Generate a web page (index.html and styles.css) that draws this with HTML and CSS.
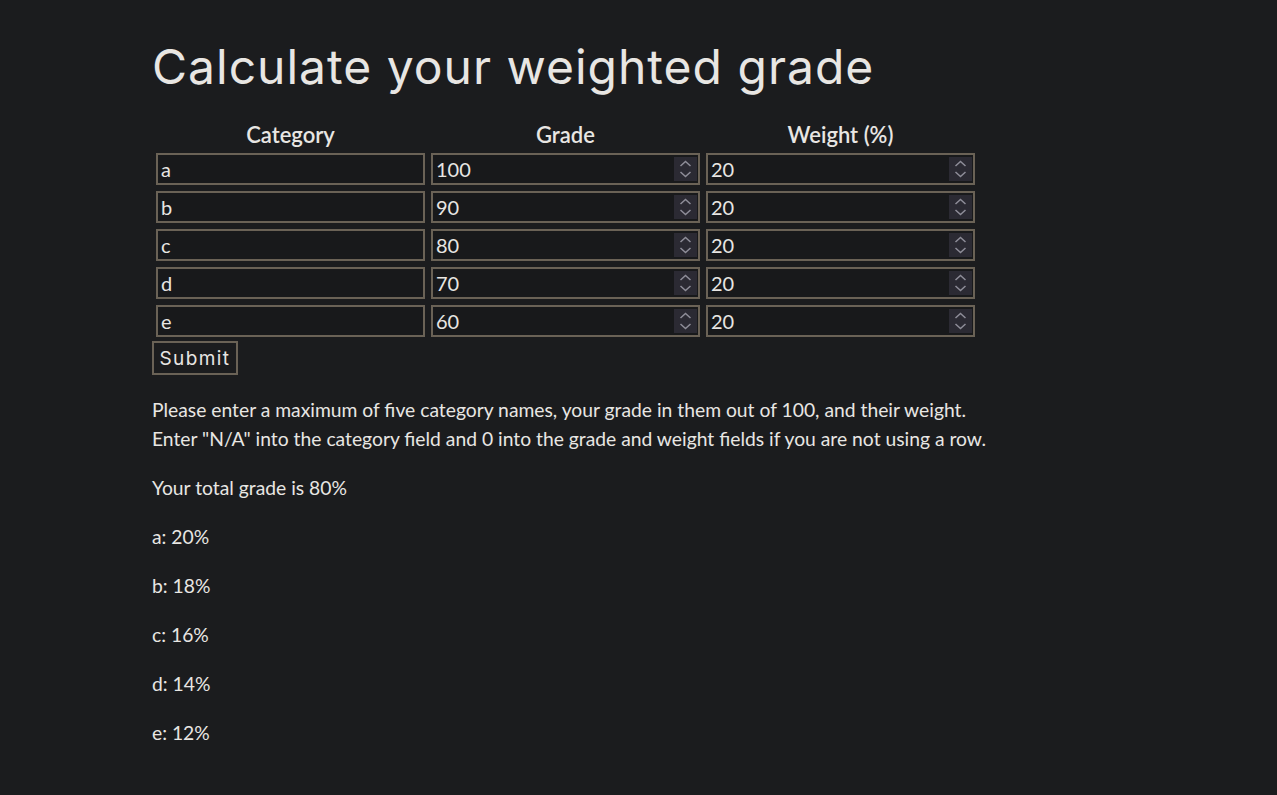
FILE: index.html
```html
<!DOCTYPE html>
<html lang="en">
<head>
<meta charset="utf-8">
<title>Weighted Grade Calculator</title>
<link rel="stylesheet" href="styles.css">
</head>
<body>
<main class="page">
  <h1 class="title">Calculate your weighted grade</h1>
  <form class="calc">
    <table class="grid">
      <thead>
        <tr><th>Category</th><th>Grade</th><th>Weight (%)</th></tr>
      </thead>
      <tbody>
        <tr>
          <td><input class="field" type="text" value="a"></td>
          <td><div class="num"><input type="number" value="100"><span class="spin"><svg viewBox="0 0 23 24" width="23" height="24"><path d="M6.5 9 L11.5 4.5 L16.5 9 M6.5 15 L11.5 19.5 L16.5 15" fill="none" stroke="#8e8d98" stroke-width="1.5"/></svg></span></div></td>
          <td><div class="num"><input type="number" value="20"><span class="spin"><svg viewBox="0 0 23 24" width="23" height="24"><path d="M6.5 9 L11.5 4.5 L16.5 9 M6.5 15 L11.5 19.5 L16.5 15" fill="none" stroke="#8e8d98" stroke-width="1.5"/></svg></span></div></td>
        </tr>
        <tr>
          <td><input class="field" type="text" value="b"></td>
          <td><div class="num"><input type="number" value="90"><span class="spin"><svg viewBox="0 0 23 24" width="23" height="24"><path d="M6.5 9 L11.5 4.5 L16.5 9 M6.5 15 L11.5 19.5 L16.5 15" fill="none" stroke="#8e8d98" stroke-width="1.5"/></svg></span></div></td>
          <td><div class="num"><input type="number" value="20"><span class="spin"><svg viewBox="0 0 23 24" width="23" height="24"><path d="M6.5 9 L11.5 4.5 L16.5 9 M6.5 15 L11.5 19.5 L16.5 15" fill="none" stroke="#8e8d98" stroke-width="1.5"/></svg></span></div></td>
        </tr>
        <tr>
          <td><input class="field" type="text" value="c"></td>
          <td><div class="num"><input type="number" value="80"><span class="spin"><svg viewBox="0 0 23 24" width="23" height="24"><path d="M6.5 9 L11.5 4.5 L16.5 9 M6.5 15 L11.5 19.5 L16.5 15" fill="none" stroke="#8e8d98" stroke-width="1.5"/></svg></span></div></td>
          <td><div class="num"><input type="number" value="20"><span class="spin"><svg viewBox="0 0 23 24" width="23" height="24"><path d="M6.5 9 L11.5 4.5 L16.5 9 M6.5 15 L11.5 19.5 L16.5 15" fill="none" stroke="#8e8d98" stroke-width="1.5"/></svg></span></div></td>
        </tr>
        <tr>
          <td><input class="field" type="text" value="d"></td>
          <td><div class="num"><input type="number" value="70"><span class="spin"><svg viewBox="0 0 23 24" width="23" height="24"><path d="M6.5 9 L11.5 4.5 L16.5 9 M6.5 15 L11.5 19.5 L16.5 15" fill="none" stroke="#8e8d98" stroke-width="1.5"/></svg></span></div></td>
          <td><div class="num"><input type="number" value="20"><span class="spin"><svg viewBox="0 0 23 24" width="23" height="24"><path d="M6.5 9 L11.5 4.5 L16.5 9 M6.5 15 L11.5 19.5 L16.5 15" fill="none" stroke="#8e8d98" stroke-width="1.5"/></svg></span></div></td>
        </tr>
        <tr>
          <td><input class="field" type="text" value="e"></td>
          <td><div class="num"><input type="number" value="60"><span class="spin"><svg viewBox="0 0 23 24" width="23" height="24"><path d="M6.5 9 L11.5 4.5 L16.5 9 M6.5 15 L11.5 19.5 L16.5 15" fill="none" stroke="#8e8d98" stroke-width="1.5"/></svg></span></div></td>
          <td><div class="num"><input type="number" value="20"><span class="spin"><svg viewBox="0 0 23 24" width="23" height="24"><path d="M6.5 9 L11.5 4.5 L16.5 9 M6.5 15 L11.5 19.5 L16.5 15" fill="none" stroke="#8e8d98" stroke-width="1.5"/></svg></span></div></td>
        </tr>
      </tbody>
    </table>
    <button class="submit" type="button">Submit</button>
  </form>
  <p class="text">Please enter a maximum of five category names, your grade in them out of 100, and their weight.<br>Enter "N/A" into the category field and 0 into the grade and weight fields if you are not using a row.</p>
  <p class="text">Your total grade is 80%</p>
  <p class="text">a: 20%</p>
  <p class="text">b: 18%</p>
  <p class="text">c: 16%</p>
  <p class="text">d: 14%</p>
  <p class="text">e: 12%</p>
</main>
</body>
</html>
```

FILE: styles.css
```css
html, body {
  margin: 0;
  background: #1b1c1e;
  color: #e8e6e3;
  font-family: Lato, "Liberation Sans", sans-serif;
}

.page {
  padding: 38px 0 0 152px;
}

.title {
  margin: 0 0 23px;
  font-family: Inter, "DejaVu Sans", sans-serif;
  font-weight: 400;
  font-size: 48px;
  line-height: 58px;
  letter-spacing: 1px;
  color: #e8e6e3;
}

.calc {
  margin: 0;
}

.grid {
  border-collapse: separate;
  border-spacing: 2px;
  margin: 0;
}

.grid th {
  padding: 2px;
  font-size: 22px;
  line-height: 24px;
  font-weight: 600;
  text-align: center;
  color: #e8e6e3;
}

.grid td {
  padding: 2px;
}

.field,
.num {
  box-sizing: border-box;
  width: 269px;
  height: 32px;
  border: 2px solid #6a6256;
  background: #18191b;
  color: #e8e6e3;
}

.field {
  display: block;
  padding: 0 3px;
  font: 20px Lato, "Liberation Sans", sans-serif;
  outline: none;
}

.num {
  display: flex;
  align-items: center;
  padding-right: 1px;
}

.num input {
  flex: 1;
  min-width: 0;
  height: 100%;
  border: 0;
  padding: 0 3px;
  background: transparent;
  color: #e8e6e3;
  font: 20px Lato, "Liberation Sans", sans-serif;
  outline: none;
  -moz-appearance: textfield;
}

.num input::-webkit-inner-spin-button,
.num input::-webkit-outer-spin-button {
  -webkit-appearance: none;
  margin: 0;
}

.spin {
  display: block;
  width: 23px;
  height: 24px;
  background: #2b2a33;
}

.spin svg {
  display: block;
}

.submit {
  display: block;
  box-sizing: border-box;
  width: 86px;
  height: 34px;
  margin: 0;
  padding: 0;
  border: 2px solid #6a6256;
  background: #1b1c1e;
  color: #e8e6e3;
  font-family: Inter, "DejaVu Sans", sans-serif;
  font-weight: 400;
  font-size: 19px;
  letter-spacing: 1.4px;
}

.text {
  margin: 20px 0;
  font-size: 19.3px;
  line-height: 29px;
}
```
